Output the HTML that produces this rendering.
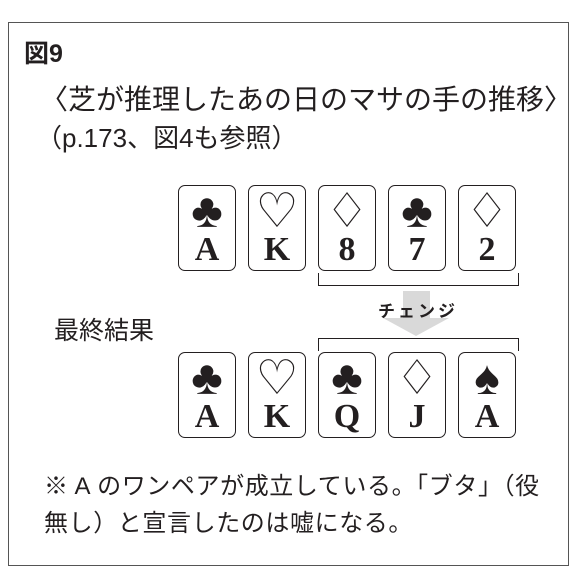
<!DOCTYPE html>
<html><head><meta charset="utf-8"><style>
body{margin:0;width:580px;height:579px;background:#fff;position:relative;overflow:hidden;font-family:"Liberation Sans","Noto Sans CJK JP",sans-serif;color:#231f20}
.frame{position:absolute;left:8px;top:22px;width:561px;height:544px;border:1.5px solid #555;box-sizing:border-box}
.t{position:absolute;white-space:nowrap}
.card{position:absolute;width:58px;height:86px;border:1.5px solid #231f20;border-radius:7px;box-sizing:border-box;text-align:center;font-family:"Liberation Serif",serif;font-weight:bold}
.card .s{position:absolute;left:0;right:0;top:2px;font-size:48px;line-height:48px;font-weight:normal}
.card .r{position:absolute;left:0;right:0;top:47px;font-size:34px;line-height:34px}
.br{position:absolute;border:1.5px solid #231f20}
</style></head><body>
<div class="frame"></div>
<div class="t" style="left:24px;top:34px;font-size:25px;font-weight:bold">図9</div>
<div class="t" style="left:40px;top:78px;font-size:28px">〈芝が推理したあの日のマサの手の推移〉</div>
<div class="t" style="left:36px;top:118px;font-size:26px">（p.173、図4も参照）</div>

<div class="card" style="left:178px;top:185px"><div class="s">♣</div><div class="r">A</div></div>
<div class="card" style="left:248px;top:185px"><div class="s">♡</div><div class="r">K</div></div>
<div class="card" style="left:318px;top:185px"><div class="s">♢</div><div class="r">8</div></div>
<div class="card" style="left:388px;top:185px"><div class="s">♣</div><div class="r">7</div></div>
<div class="card" style="left:458px;top:185px"><div class="s">♢</div><div class="r">2</div></div>

<div class="br" style="left:318px;top:273px;width:199px;height:12px;border-top:none"></div>
<div style="position:absolute;left:403px;top:291px;width:27px;height:28px;background:#d9d9d9"></div>
<div style="position:absolute;left:383px;top:318px;width:0;height:0;border-left:33px solid transparent;border-right:33px solid transparent;border-top:18px solid #d9d9d9"></div>
<div class="t" style="left:378px;top:297px;font-size:17px;letter-spacing:3px;font-weight:bold">チェンジ</div>
<div class="br" style="left:318px;top:338px;width:199px;height:12px;border-bottom:none"></div>

<div class="t" style="left:54px;top:311px;font-size:25px">最終結果</div>

<div class="card" style="left:178px;top:352px"><div class="s">♣</div><div class="r">A</div></div>
<div class="card" style="left:248px;top:352px"><div class="s">♡</div><div class="r">K</div></div>
<div class="card" style="left:318px;top:352px"><div class="s">♣</div><div class="r">Q</div></div>
<div class="card" style="left:388px;top:352px"><div class="s">♢</div><div class="r">J</div></div>
<div class="card" style="left:458px;top:352px"><div class="s">♠</div><div class="r">A</div></div>

<div class="t" style="left:44px;top:466px;font-size:24px;letter-spacing:0.6px">※ A のワンペアが成立している。「ブタ」（役</div>
<div class="t" style="left:44px;top:503px;font-size:24px;letter-spacing:0.6px">無し）と宣言したのは嘘になる。</div>
</body></html>
